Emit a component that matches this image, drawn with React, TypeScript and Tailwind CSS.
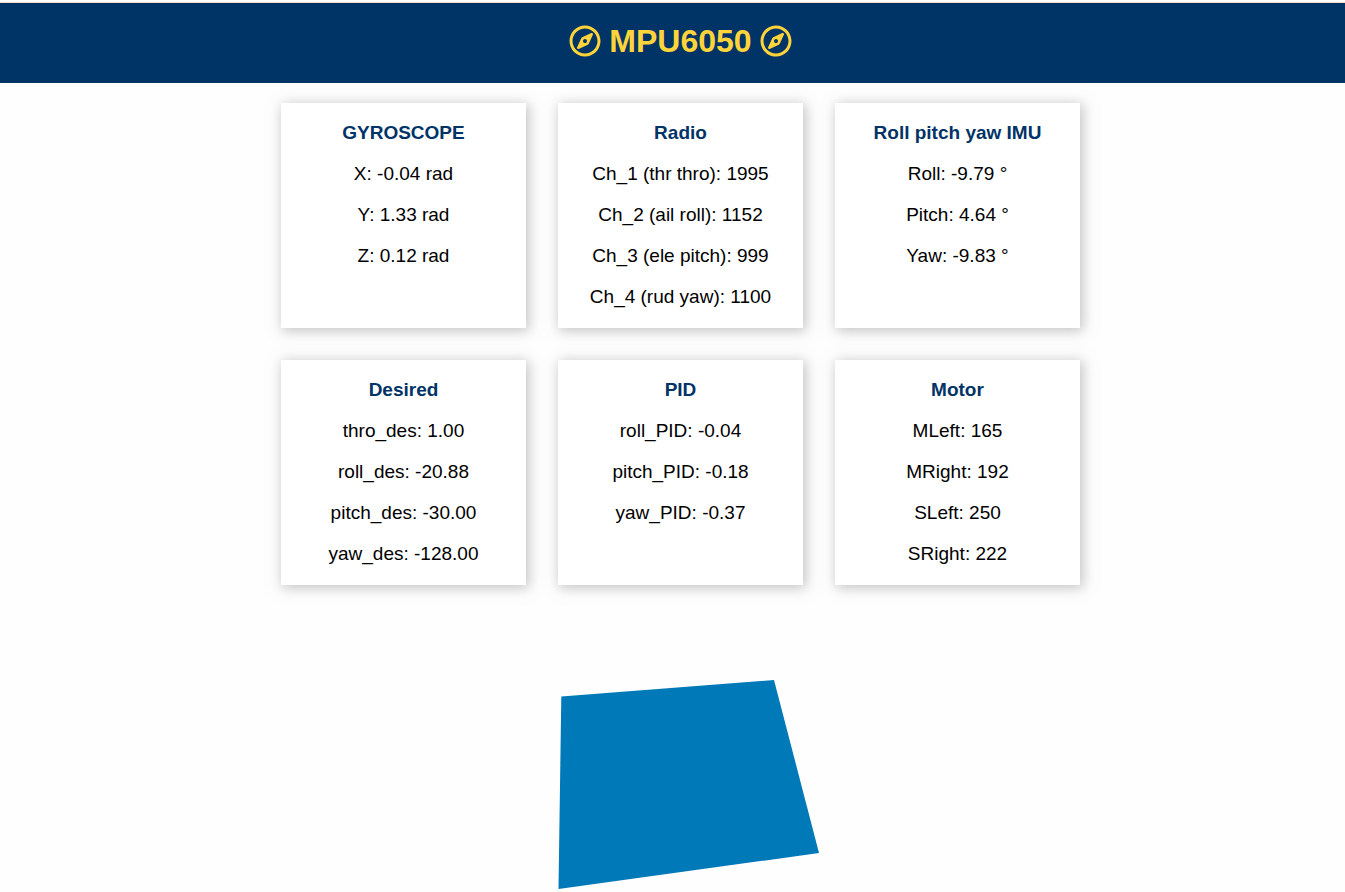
import { FaRegCompass } from 'react-icons/fa';

interface Panel {
  title: string;
  readings: [label: string, value: string][];
}

const panels: Panel[] = [
  {
    title: 'GYROSCOPE',
    readings: [
      ['X', '-0.04 rad'],
      ['Y', '1.33 rad'],
      ['Z', '0.12 rad'],
    ],
  },
  {
    title: 'Radio',
    readings: [
      ['Ch_1 (thr thro)', '1995'],
      ['Ch_2 (ail roll)', '1152'],
      ['Ch_3 (ele pitch)', '999'],
      ['Ch_4 (rud yaw)', '1100'],
    ],
  },
  {
    title: 'Roll pitch yaw IMU',
    readings: [
      ['Roll', '-9.79 °'],
      ['Pitch', '4.64 °'],
      ['Yaw', '-9.83 °'],
    ],
  },
  {
    title: 'Desired',
    readings: [
      ['thro_des', '1.00'],
      ['roll_des', '-20.88'],
      ['pitch_des', '-30.00'],
      ['yaw_des', '-128.00'],
    ],
  },
  {
    title: 'PID',
    readings: [
      ['roll_PID', '-0.04'],
      ['pitch_PID', '-0.18'],
      ['yaw_PID', '-0.37'],
    ],
  },
  {
    title: 'Motor',
    readings: [
      ['MLeft', '165'],
      ['MRight', '192'],
      ['SLeft', '250'],
      ['SRight', '222'],
    ],
  },
];

function Card({ title, readings }: Panel) {
  return (
    <section className="flex flex-col gap-[19px] bg-white pt-[19px] pb-5 text-center text-[19px] leading-[22px] shadow-[2px_2px_12px_1px_rgba(140,140,140,0.5)]">
      <h2 className="font-bold text-[#003366]">{title}</h2>
      {readings.map(([label, value]) => (
        <p key={label}>
          {label}: {value}
        </p>
      ))}
    </section>
  );
}

export default function App() {
  return (
    <div className="min-h-screen bg-[#fefefe] font-['Liberation_Sans',Arial,sans-serif] text-black">
      <header className="border-t-2 border-white">
        <div className="flex h-[81px] items-center justify-center gap-2 border-t border-[#fcd9c8] bg-[#003366] pb-1 pl-4 text-[#ffd43b]">
          <FaRegCompass className="size-8" aria-hidden="true" />
          <h1 className="text-[32px] leading-9 font-bold">MPU6050</h1>
          <FaRegCompass className="size-8" aria-hidden="true" />
        </div>
      </header>
      <main className="flex flex-col items-center pt-5 pl-4">
        <div className="grid w-full max-w-[799px] grid-cols-3 gap-8">
          {panels.map((panel) => (
            <Card key={panel.title} {...panel} />
          ))}
        </div>
        <svg className="mt-[95px] h-[210px] w-[277px]" viewBox="0 0 277 210" role="img" aria-label="Orientation">
          <polygon points="19.3,16.5 232,0 277,173 16.5,209" fill="#0079b8" />
        </svg>
      </main>
    </div>
  );
}
